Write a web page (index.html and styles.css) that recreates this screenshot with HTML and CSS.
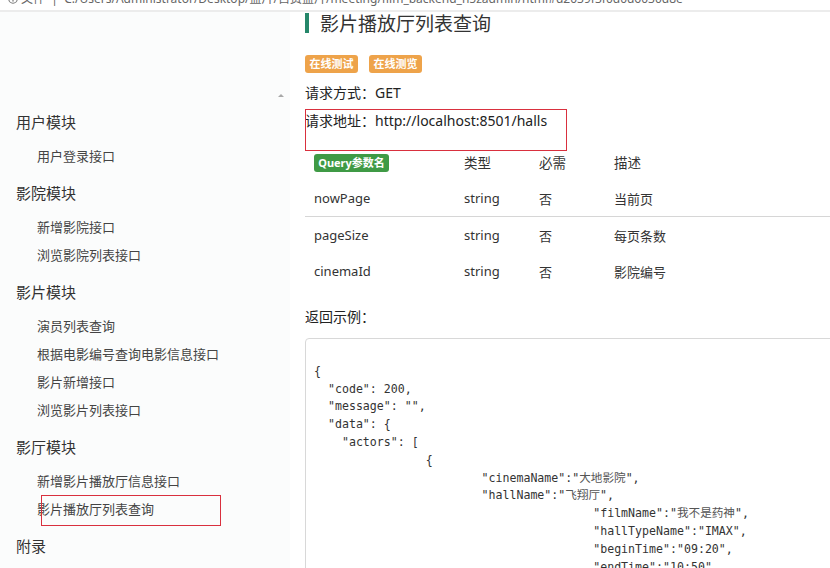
FILE: index.html
```html
<!DOCTYPE html>
<html lang="zh-CN">
<head>
<meta charset="utf-8">
<title>影片播放厅列表查询</title>
<link rel="stylesheet" href="styles.css">
</head>
<body>
<div class="urlbar">
  <span class="url-text"><svg class="info-icon" width="10" height="10" viewBox="0 0 10 10"><circle cx="5" cy="5" r="4.2" fill="none" stroke="#777" stroke-width="1.1"/><rect x="4.4" y="4" width="1.2" height="3.6" fill="#777"/></svg> 文件 &nbsp;|&nbsp; C:/Users/Administrator/Desktop/盘片/自费盘片/meeting/film_backend_h5zadmin/html#d2039f3f0d0d6030d8e</span>
</div>
<div class="layout">
  <aside class="sidebar">
    <span class="scroll-arrow"></span>
    <div class="group">
      <div class="group-title">用户模块</div>
      <div class="item">用户登录接口</div>
    </div>
    <div class="group">
      <div class="group-title">影院模块</div>
      <div class="item">新增影院接口</div>
      <div class="item">浏览影院列表接口</div>
    </div>
    <div class="group">
      <div class="group-title">影片模块</div>
      <div class="item">演员列表查询</div>
      <div class="item">根据电影编号查询电影信息接口</div>
      <div class="item">影片新增接口</div>
      <div class="item">浏览影片列表接口</div>
    </div>
    <div class="group">
      <div class="group-title">影厅模块</div>
      <div class="item">新增影片播放厅信息接口</div>
      <div class="item item-marked">影片播放厅列表查询</div>
    </div>
    <div class="group">
      <div class="group-title">附录</div>
    </div>
  </aside>
  <main class="main">
    <h1 class="doc-title">影片播放厅列表查询</h1>
    <div class="badges">
      <span class="badge badge-orange">在线测试</span>
      <span class="badge badge-orange">在线测览</span>
    </div>
    <div class="line">请求方式：GET</div>
    <div class="line line-marked">请求地址：http://localhost:8501/halls</div>
    <table class="params">
      <thead>
        <tr>
          <th class="col-name"><span class="badge badge-green">Query参数名</span></th>
          <th class="col-type">类型</th>
          <th class="col-req">必需</th>
          <th>描述</th>
        </tr>
      </thead>
      <tbody>
        <tr class="ruled"><td>nowPage</td><td>string</td><td>否</td><td>当前页</td></tr>
        <tr><td>pageSize</td><td>string</td><td>否</td><td>每页条数</td></tr>
        <tr><td>cinemaId</td><td>string</td><td>否</td><td>影院编号</td></tr>
      </tbody>
    </table>
    <div class="line return-label">返回示例：</div>
<pre class="code">

{
  "code": 200,
  "message": "",
  "data": {
    "actors": [
                {
                        "cinemaName":"<span class="cn">大地影院</span>",
                        "hallName":"<span class="cn">飞翔厅</span>",
                                        "filmName":"<span class="cn">我不是药神</span>",
                                        "hallTypeName":"IMAX",
                                        "beginTime":"09:20",
                                        "endTime":"10:50",
                                        "price":"45"
                }
    ]
  }
}
</pre>
  </main>
</div>
</body>
</html>
```

FILE: styles.css
```css
html, body {
  margin: 0;
  padding: 0;
  background: #ffffff;
  overflow: hidden;
}

body {
  width: 830px;
  height: 568px;
  font-family: "Noto Sans", "Noto Sans CJK SC", sans-serif;
  color: #333333;
}

.urlbar {
  height: 10px;
  overflow: hidden;
  border-bottom: 2px solid #ececec;
  background: #ffffff;
}

.url-text {
  display: block;
  margin-top: -8px;
  padding-left: 8px;
  font-size: 12px;
  line-height: 13px;
  color: #666666;
  white-space: nowrap;
  font-family: "Noto Sans", "Noto Sans CJK SC", sans-serif;
}

.info-icon {
  vertical-align: -1px;
}

.layout {
  display: flex;
  align-items: flex-start;
}

.sidebar {
  position: relative;
  flex: 0 0 290px;
  width: 290px;
  height: 556px;
  padding-top: 88.5px;
  box-sizing: border-box;
  background: #fbfcfc;
  font-family: "Noto Sans CJK SC", sans-serif;
}

.scroll-arrow {
  position: absolute;
  left: 278px;
  top: 82px;
  width: 0;
  height: 0;
  border-left: 3px solid transparent;
  border-right: 3px solid transparent;
  border-bottom: 3px solid #a8a8a8;
}

.group {
  margin-bottom: 2px;
}

.group-title {
  height: 41px;
  line-height: 41px;
  padding-left: 16px;
  font-size: 15px;
  color: #333333;
}

.item {
  position: relative;
  height: 28px;
  line-height: 28px;
  padding-left: 37px;
  font-size: 13px;
  color: #444444;
}

.item-marked::after {
  content: "";
  position: absolute;
  left: 41px;
  top: 0;
  width: 178px;
  height: 29px;
  border: 1px solid #d9303e;
}

.main {
  flex: 0 0 560px;
  width: 560px;
  padding-left: 15px;
}

.doc-title {
  margin: 1px 0 0 0;
  height: 20px;
  line-height: 20px;
  padding-left: 11px;
  border-left: 4px solid #25876a;
  font-size: 19px;
  font-weight: normal;
  color: #333333;
  font-family: "Noto Sans CJK SC", sans-serif;
}

.badges {
  display: flex;
  gap: 11px;
  margin-top: 22px;
}

.badge {
  display: inline-block;
  height: 18px;
  line-height: 18px;
  border-radius: 3px;
  font-size: 11px;
  font-weight: bold;
  color: #ffffff;
  text-align: center;
  font-family: "Noto Sans", "Noto Sans CJK SC", sans-serif;
}

.badge-orange {
  width: 53px;
  background: #eea34a;
}

.badge-green {
  width: 75px;
  background: #3f9a45;
}

.line {
  position: relative;
  height: 28px;
  line-height: 28px;
  font-size: 14px;
  color: #222222;
  margin-top: 6px;
}

.line-marked {
  margin-top: 0;
}

.line-marked::after {
  content: "";
  position: absolute;
  left: 0;
  top: 2px;
  width: 260px;
  height: 40px;
  border: 1px solid #d9303e;
}

.params {
  width: 525px;
  margin-top: 9px;
  border-collapse: collapse;
  font-size: 13px;
  color: #333333;
}

.params th,
.params td {
  height: 36px;
  padding: 0 0 0 9px;
  text-align: left;
  font-weight: normal;
  vertical-align: middle;
}

.params th {
  font-size: 13.5px;
}

.params .col-name {
  width: 141px;
}

.params .col-type {
  width: 66px;
}

.params .col-req {
  width: 66px;
}

.params tr.ruled td {
  border-bottom: 1px solid #d6d6d6;
}

.return-label {
  margin-top: 16px;
  height: 24px;
  line-height: 24px;
}

.code {
  margin: 9px 0 0 0;
  width: 600px;
  padding: 6px 8px;
  border: 1px solid #d8d8d8;
  border-radius: 4px;
  background: #ffffff;
  font-family: "DejaVu Sans Mono", "Noto Sans CJK SC", monospace;
  font-size: 11.6px;
  line-height: 17.8px;
  color: #333333;
}

.code .cn {
  color: #555555;
}
```
